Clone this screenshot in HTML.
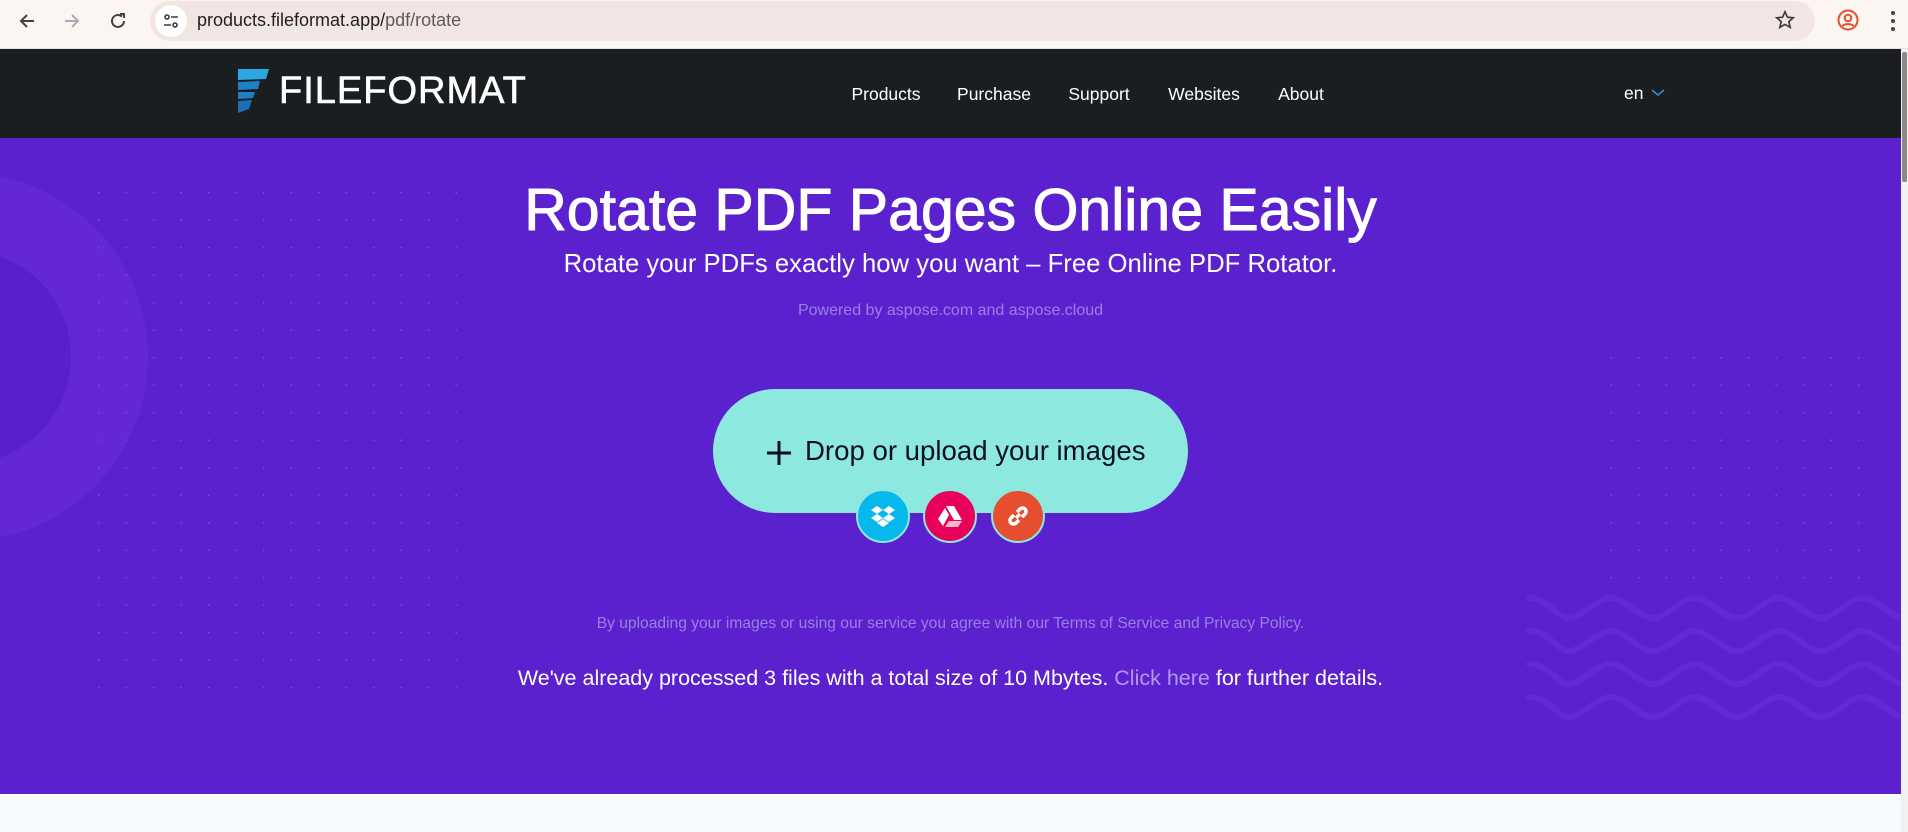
<!DOCTYPE html>
<html><head><meta charset="utf-8"><style>
*{margin:0;padding:0;box-sizing:border-box}
body{width:1908px;height:832px;overflow:hidden;background:#f7fbfd;font-family:"Liberation Sans",sans-serif;position:relative}
.abs{position:absolute}
.bar{left:0;top:0;width:1908px;height:49px;background:#fcf6f3;border-bottom:1px solid #eadfdb}
.url{left:150px;top:1px;width:1665px;height:40px;border-radius:20px;background:#f2e6e4}
.nav{left:0;top:49px;width:1901px;height:89px;background:#1b1e21}
.navi{top:84px;color:#fff;font-size:17.5px;transform:translateX(-50%)}
.hero{left:0;top:138px;width:1901px;height:656px;background:#5b21ce;overflow:hidden}
.c{left:0;width:1901px;text-align:center}
.sb{left:1901px;top:49px;width:7px;height:783px;background:#f1f1f1}
</style></head><body>
<div class="abs bar"></div>
<div class="abs url"></div>
<svg class="abs" style="left:16px;top:10px" width="22" height="22" viewBox="0 0 22 22"><path d="M18 11H5M11 5l-6 6 6 6" stroke="#4a3f3c" stroke-width="2" fill="none"/></svg>
<svg class="abs" style="left:61px;top:10px" width="22" height="22" viewBox="0 0 22 22"><path d="M4 11h13M11 5l6 6-6 6" stroke="#b9a3b6" stroke-width="2" fill="none"/></svg>
<svg class="abs" style="left:107px;top:10px" width="22" height="22" viewBox="0 0 22 22"><path d="M17 11a6 6 0 1 1-2-4.5" stroke="#4a3f3c" stroke-width="2" fill="none"/><path d="M13 4h4v4" stroke="#4a3f3c" stroke-width="2" fill="none"/></svg>
<div class="abs" style="left:155px;top:5px;width:32px;height:32px;border-radius:16px;background:#fff"></div>
<svg class="abs" style="left:162px;top:12px" width="18" height="18" viewBox="0 0 18 18" fill="none" stroke="#3c3c3c" stroke-width="1.6"><circle cx="5" cy="5" r="2"/><path d="M9 5h7M2 13h7"/><circle cx="13" cy="13" r="2"/></svg>
<div class="abs" style="left:197px;top:10px;font-size:18px;color:#1f1f1f">products.fileformat.app/<span style="color:#5f5a58">pdf/rotate</span></div>
<svg class="abs" style="left:1774px;top:9px" width="22" height="22" viewBox="0 0 24 24"><path d="M12 3l2.7 6 6.3.6-4.8 4.2 1.5 6.2L12 16.8 6.3 20l1.5-6.2L3 9.6 9.3 9z" fill="none" stroke="#3f3a38" stroke-width="1.8"/></svg>
<svg class="abs" style="left:1836px;top:8px" width="24" height="24" viewBox="0 0 24 24" fill="none" stroke="#e2502d" stroke-width="2"><circle cx="12" cy="12" r="9.5"/><circle cx="12" cy="10" r="3.3"/><path d="M6.5 18c2-2.5 9-2.5 11 0"/></svg>
<div class="abs" style="left:1891px;top:11px;width:4px;height:4px;border-radius:2px;background:#4a3f3c;box-shadow:0 8px 0 #4a3f3c,0 16px 0 #4a3f3c"></div>

<div class="abs nav"></div>
<svg class="abs" style="left:238px;top:69px" width="32" height="44" viewBox="0 0 32 44"><path d="M0 0h31l-3 10L0 11z" fill="#2aa7e0"/><path d="M0 13l22-1-2 8L0 21z" fill="#1f80c5"/><path d="M0 23l17-0-2 6-15 1z" fill="#1f80c5"/><path d="M0 32l14-1-3 9-11 4z" fill="#1b6fb6"/></svg>
<div class="abs" style="left:279px;top:71px;color:#fff;font-size:38px;letter-spacing:1px;line-height:40px;-webkit-text-stroke:0.6px #fff">FILEFORMAT</div>
<div class="abs navi" style="left:886px">Products</div>
<div class="abs navi" style="left:994px">Purchase</div>
<div class="abs navi" style="left:1099px">Support</div>
<div class="abs navi" style="left:1204px">Websites</div>
<div class="abs navi" style="left:1301px">About</div>
<div class="abs" style="left:1624px;top:83px;color:#fff;font-size:17.5px">en</div>
<svg class="abs" style="left:1651px;top:88px" width="14" height="10" viewBox="0 0 14 10"><path d="M1 2l6 5 6-5" stroke="#2f8fe0" stroke-width="1.5" fill="none"/></svg>

<div class="abs hero">
<svg class="abs" style="left:0;top:0" width="1901" height="656">
<defs><pattern id="d" x="98" y="54" width="27.5" height="27.5" patternUnits="userSpaceOnUse"><rect width="1.4" height="1.4" fill="#7c50dc"/></pattern></defs>
<circle cx="-36" cy="219" r="184" fill="#6427d6"/>
<circle cx="-36" cy="219" r="107" fill="#5a1fcc"/>
<rect x="98" y="54" width="370" height="500" fill="url(#d)"/>
<rect x="1593" y="200" width="290" height="250" fill="url(#d)"/>
<g fill="none" stroke="#6329d6" stroke-width="6" stroke-linecap="round">
<path d="M1529 460c20 0 28 20 40 20s28-20 42-20 28 20 42 20 28-20 42-20 28 20 42 20 28-20 42-20 28 20 42 20 28-20 42-20 28 20 42 20 28-20 42-20"/>
<path d="M1529 493c20 0 28 20 40 20s28-20 42-20 28 20 42 20 28-20 42-20 28 20 42 20 28-20 42-20 28 20 42 20 28-20 42-20 28 20 42 20 28-20 42-20"/>
<path d="M1529 526c20 0 28 20 40 20s28-20 42-20 28 20 42 20 28-20 42-20 28 20 42 20 28-20 42-20 28 20 42 20 28-20 42-20 28 20 42 20 28-20 42-20"/>
<path d="M1529 559c20 0 28 20 40 20s28-20 42-20 28 20 42 20 28-20 42-20 28 20 42 20 28-20 42-20 28 20 42 20 28-20 42-20 28 20 42 20 28-20 42-20"/>
</g></svg>
<div class="abs c" style="top:37px;color:#fff;font-size:59px;line-height:70px;-webkit-text-stroke:1px #fff">Rotate PDF Pages Online Easily</div>
<div class="abs c" style="top:111px;color:#fff;font-size:25.7px;line-height:30px">Rotate your PDFs exactly how you want – Free Online PDF Rotator.</div>
<div class="abs c" style="top:163px;color:#9a7fe6;font-size:16px;line-height:20px">Powered by aspose.com and aspose.cloud</div>
<div class="abs" style="left:713px;top:251px;width:475px;height:124px;border-radius:62px;background:#8de8df"></div>
<svg class="abs" style="left:766px;top:302px" width="26" height="26" viewBox="0 0 26 26"><path d="M13 1v24M1 13h24" stroke="#0f0f22" stroke-width="3"/></svg>
<div class="abs" style="left:805px;top:296px;font-size:27.6px;color:#0f0f22;line-height:34px">Drop or upload your images</div>
<div class="abs" style="left:856px;top:351px;width:54px;height:54px;border-radius:27px;background:#06b8ec;border:2px solid #8de8df"></div>
<div class="abs" style="left:923px;top:351px;width:54px;height:54px;border-radius:27px;background:#e8005a;border:2px solid #8de8df"></div>
<div class="abs" style="left:991px;top:351px;width:54px;height:54px;border-radius:27px;background:#e54e2e;border:2px solid #8de8df"></div>
<svg class="abs" style="left:871px;top:366px" width="24" height="24" viewBox="0 0 24 24" fill="#fff"><path d="M6 2l6 4-6 4-6-4zM18 2l6 4-6 4-6-4zM6 10l6 4-6 4-6-4zM18 10l6 4-6 4-6-4zM12 15l6 4-6 4-6-4z"/></svg>
<svg class="abs" style="left:938px;top:366px" width="24" height="24" viewBox="0 0 24 24" fill="#fff"><path d="M8 2h8l8 14h-8zM7 4l4 7-6 11-5-7z"/><path d="M11 17h13l-4 6H7z" fill="#f5b6c8"/></svg>
<svg class="abs" style="left:1006px;top:366px" width="24" height="24" viewBox="0 0 24 24" fill="none" stroke="#fff" stroke-width="3.5"><path d="M10 14l4-4M8 11l-3 3a3.5 3.5 0 0 0 5 5l3-3M16 13l3-3a3.5 3.5 0 0 0-5-5l-3 3"/></svg>
<div class="abs c" style="top:475px;color:#9a7fe6;font-size:15.6px;line-height:22px">By uploading your images or using our service you agree with our Terms of Service and Privacy Policy.</div>
<div class="abs c" style="top:527px;color:#fff;font-size:21.5px;line-height:26px">We've already processed 3 files with a total size of 10 Mbytes. <span style="color:#b09af0">Click here</span> for further details.</div>
</div>
<div class="abs sb"></div>
<div class="abs" style="left:1902px;top:52px;width:5px;height:130px;background:#8d8a88;border-radius:2px"></div>
</body></html>
